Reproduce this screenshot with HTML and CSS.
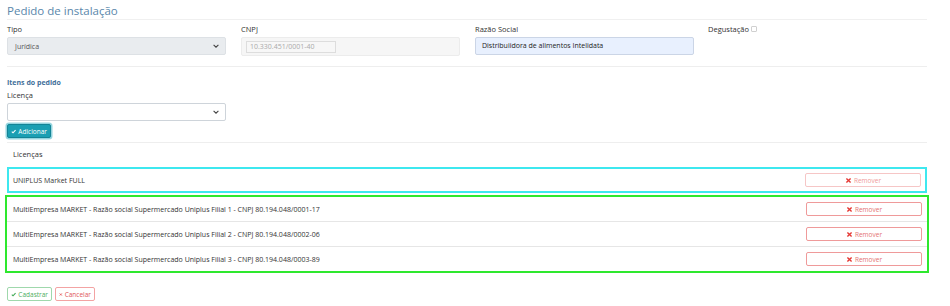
FILE: index.html
```html
<!DOCTYPE html>
<html lang="pt-BR">
<head>
    <meta charset="UTF-8">
    <title>Pedido de instalação</title>
    <link rel="stylesheet" href="styles.css">
</head>
<body>

    <!-- Cabeçalho -->
    <h1 class="page-title">Pedido de instalação</h1>

    <!-- Dados do cliente -->
    <div class="form-row">
        <div class="field">
            <label>Tipo</label>
            <div class="select disabled">
                <span>Jurídica</span>
                <svg class="caret" viewBox="0 0 10 6"><path d="M1 1l4 4 4-4" /></svg>
            </div>
        </div>
        <div class="field">
            <label>CNPJ</label>
            <div class="cnpj-wrap">
                <div class="cnpj-input">10.330.451/0001-40</div>
            </div>
        </div>
        <div class="field">
            <label>Razão Social</label>
            <div class="text-input autofill">Distribuiidora de alimentos Intelidata</div>
        </div>
        <div class="field">
            <label>Degustação <span class="checkbox"></span></label>
        </div>
    </div>

    <!-- Itens do pedido -->
    <div class="items">
        <h2 class="section-title">Itens do pedido</h2>
        <label class="label-block">Licença</label>
        <div class="select">
            <span></span>
            <svg class="caret" viewBox="0 0 10 6"><path d="M1 1l4 4 4-4" /></svg>
        </div>
        <button class="btn btn-info">
            <svg class="ico" viewBox="0 0 10 10"><path d="M1.5 5.2l2.3 2.3 4.7-5" /></svg>
            Adicionar
        </button>
    </div>

    <!-- Lista de licenças -->
    <div class="licencas">
        <div class="licencas-title">Licenças</div>

        <div class="group group-cyan">
            <div class="lic-row">
                <span>UNIPLUS Market FULL</span>
                <button class="btn btn-remove faded">
                    <svg class="ico" viewBox="0 0 10 10"><path d="M2 2l6 6M8 2l-6 6" /></svg>
                    Remover
                </button>
            </div>
        </div>

        <div class="group group-green">
            <div class="lic-row">
                <span>MultiEmpresa MARKET - Razão social Supermercado Uniplus Filial 1 - CNPJ 80.194.048/0001-17</span>
                <button class="btn btn-remove">
                    <svg class="ico" viewBox="0 0 10 10"><path d="M2 2l6 6M8 2l-6 6" /></svg>
                    Remover
                </button>
            </div>
            <div class="lic-row">
                <span>MultiEmpresa MARKET - Razão social Supermercado Uniplus Filial 2 - CNPJ 80.194.048/0002-06</span>
                <button class="btn btn-remove">
                    <svg class="ico" viewBox="0 0 10 10"><path d="M2 2l6 6M8 2l-6 6" /></svg>
                    Remover
                </button>
            </div>
            <div class="lic-row">
                <span>MultiEmpresa MARKET - Razão social Supermercado Uniplus Filial 3 - CNPJ 80.194.048/0003-89</span>
                <button class="btn btn-remove">
                    <svg class="ico" viewBox="0 0 10 10"><path d="M2 2l6 6M8 2l-6 6" /></svg>
                    Remover
                </button>
            </div>
        </div>
    </div>

    <!-- Ações -->
    <div class="actions">
        <button class="btn btn-success">
            <svg class="ico" viewBox="0 0 10 10"><path d="M1.5 5.2l2.3 2.3 4.7-5" /></svg>
            Cadastrar
        </button>
        <button class="btn btn-danger">
            <svg class="ico" viewBox="0 0 10 10"><path d="M2 2l6 6M8 2l-6 6" /></svg>
            Cancelar
        </button>
    </div>

</body>
</html>
```

FILE: styles.css
```css
body {
    font-family: "Open Sans", "Noto Sans", sans-serif;
    font-size: 7px;
    color: #333;
    margin: 0;
    padding: 3px 23px 0 7px;
    background-color: #fff;
}

.page-title {
    font-size: 11.5px;
    font-weight: normal;
    color: #5a87ab;
    margin: 0;
    line-height: 16px;
    border-bottom: 1px solid #f0f0f0;
}

.form-row {
    display: grid;
    grid-template-columns: 234px 234px 233px 1fr;
    padding-top: 4px;
    padding-bottom: 10px;
    border-bottom: 1px solid #eee;
}

.field label {
    display: block;
    font-size: 7.5px;
    line-height: 10px;
    height: 10px;
    margin-bottom: 3px;
}

.checkbox {
    display: inline-block;
    width: 4px;
    height: 4px;
    border: 1px solid #d0d0d0;
    border-radius: 1px;
    vertical-align: 0;
}

.select {
    width: 219px;
    height: 18px;
    box-sizing: border-box;
    border: 1px solid #ced4da;
    border-radius: 2px;
    background: #fff;
    display: flex;
    align-items: center;
    justify-content: space-between;
    padding: 0 6px 0 7px;
    color: #555;
}

.select.disabled {
    background: #e9ecef;
    border-color: #dde1e5;
}

.caret {
    width: 6px;
    height: 4px;
    fill: none;
    stroke: #444;
    stroke-width: 1.8;
}

.cnpj-wrap {
    width: 219px;
    height: 19px;
    box-sizing: border-box;
    background: #f6f6f6;
    border: 1px solid #ececec;
    border-radius: 2px;
    padding: 3px 0 0 4px;
}

.cnpj-input {
    width: 90px;
    height: 12px;
    box-sizing: border-box;
    border: 1px solid #ddd;
    background: #f7f7f7;
    color: #aaa;
    line-height: 10px;
    padding-left: 3px;
}

.text-input {
    width: 219px;
    height: 18px;
    box-sizing: border-box;
    border: 1px solid #cbd5e6;
    border-radius: 2px;
    line-height: 16px;
    padding-left: 6px;
    color: #222;
}

.autofill {
    background: #e8f0fe;
}

.items {
    padding-top: 11px;
    padding-bottom: 4px;
    border-bottom: 1px solid #eee;
}

.section-title {
    font-size: 7px;
    font-weight: bold;
    color: #3f6f9a;
    margin: 0;
    line-height: 10px;
}

.label-block {
    display: block;
    font-size: 7.5px;
    line-height: 10px;
    margin: 2px 0 3px;
}

.btn {
    font-family: "Open Sans", "Noto Sans", sans-serif;
    font-size: 6.5px;
    height: 14px;
    box-sizing: border-box;
    border-radius: 2px;
    background: #fff;
    display: inline-flex;
    align-items: center;
    justify-content: center;
    gap: 2px;
    padding: 0 3px;
    cursor: pointer;
}

.ico {
    width: 7px;
    height: 7px;
    fill: none;
    stroke-width: 2;
}

.btn-info {
    margin-top: 3px;
    width: 44px;
    background: #1a9fb3;
    border: 1px solid #138496;
    color: #fff;
    box-shadow: 0 0 0 1.5px rgba(23, 162, 184, 0.45);
}

.btn-info .ico {
    stroke: #fff;
}

.licencas {
    padding-top: 6px;
}

.licencas-title {
    padding-left: 6px;
    font-size: 7.5px;
    line-height: 10px;
    margin-bottom: 8px;
}

.group {
    box-sizing: border-box;
}

.group-cyan {
    border: 2px solid #3ee8ef;
    margin-bottom: 2px;
}

.group-green {
    border: 2px solid #2ee82e;
    margin: 0 -2px;
}

.lic-row {
    display: flex;
    align-items: center;
    justify-content: space-between;
    box-sizing: border-box;
    height: 25px;
    padding: 0 4px 0 4px;
    border-top: 1px solid #e6e6e6;
    color: #333;
}

.group-cyan .lic-row {
    height: 22px;
    border-top: none;
}

.group-green .lic-row {
    padding: 0 5px 0 6px;
}

.group-green .lic-row:first-child {
    height: 24px;
    border-top: none;
}

.btn-remove {
    width: 116px;
    border: 1px solid #ef9a9a;
    color: #e57373;
}

.btn-remove .ico {
    stroke: #e53935;
}

.btn-remove.faded {
    border-color: #f6c6c6;
    color: #f09a9a;
}

.actions {
    display: flex;
    gap: 3px;
    padding-top: 14px;
}

.btn-success {
    width: 45px;
    border: 1px solid #9fd8ac;
    color: #4cae60;
}

.btn-success .ico {
    stroke: #3fa854;
}

.btn-danger {
    width: 40px;
    border: 1px solid #f3a3a3;
    color: #e05757;
}

.btn-danger .ico {
    stroke: #e03b3b;
}
```
